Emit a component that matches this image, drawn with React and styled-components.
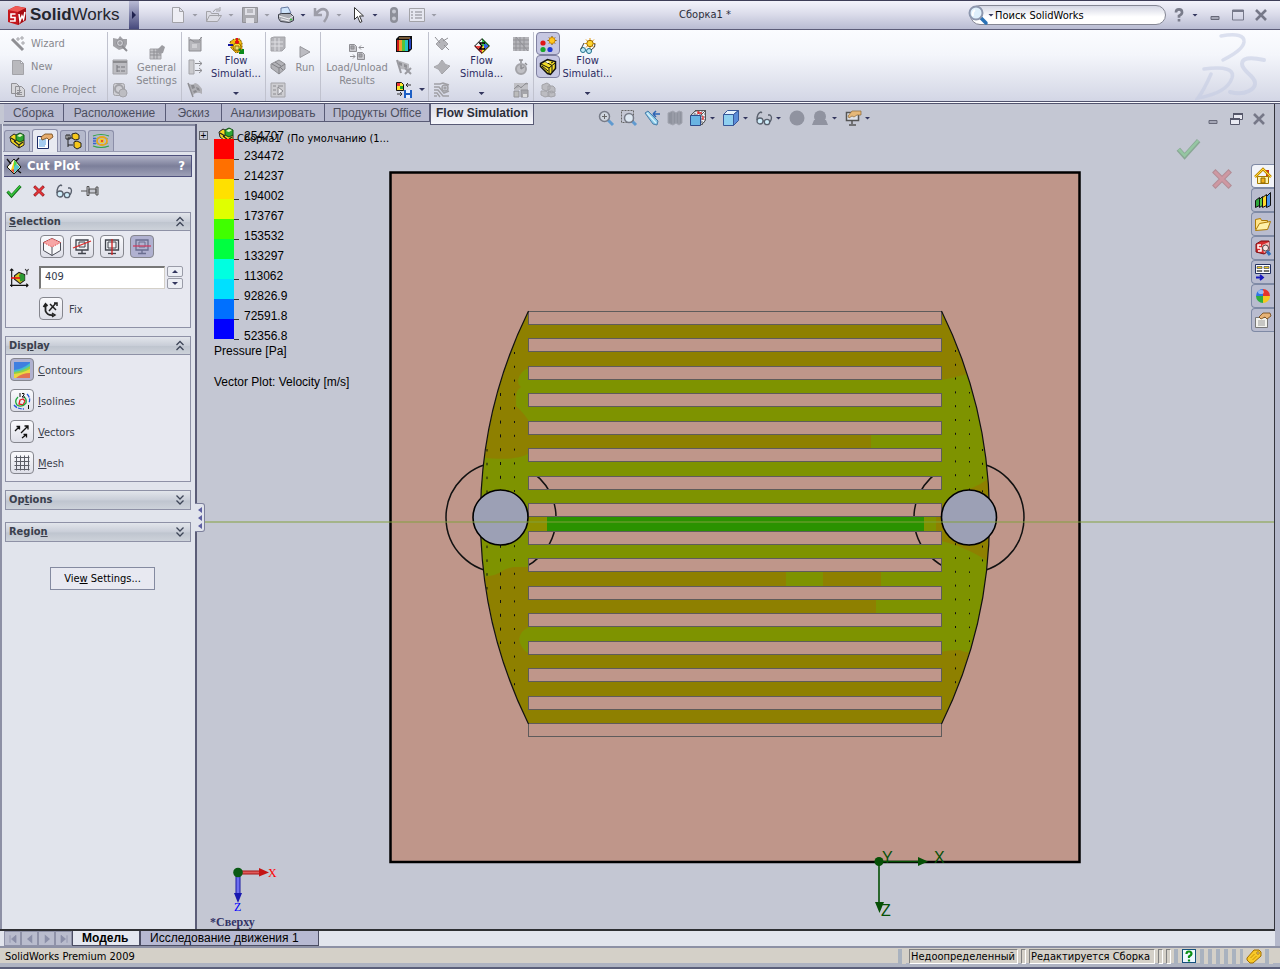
import React from 'react';
import styled, { createGlobalStyle, css } from 'styled-components';

const ui = '"DejaVu Sans Condensed", "DejaVu Sans", sans-serif';
const arial = '"Liberation Sans", Arial, sans-serif';

const Global = createGlobalStyle`
  * { box-sizing: border-box; }
  body { margin: 0; background: #b4b8cb; font: 11px/13px ${ui}; color: #000; }
  button { font: inherit; color: inherit; border: 0; padding: 0; background: none; }
  input { font: inherit; }
  u { text-underline-offset: 1px; }
`;

/* ---------- icons ---------- */

const G = '#a3a3a8';
const box = (x, y, w, h, f, s) => <rect x={x + 0.5} y={y + 0.5} width={w} height={h} fill={f} stroke={s} />;

const art = {
  wand: <g stroke={G} fill="none"><path d="M2 3l11 11" strokeWidth="3" stroke="#8f8f94" /><path d="M8 1v4M6 3h4M12 0v4M10 2h4M13 5v4M11 7h4" /></g>,
  page: <path d="M2.500 1.500h8l3 3v11h-11z M10.500 1.500v3h3" fill="#b9b9bd" stroke={G} />,
  pageLight: <path d="M2.500.5h7l4 4v11h-11z M9.500.5v4h4" fill="#eeeef4" stroke={G} />,
  clone: <g stroke="#919196" fill="#d6d6da"><path d="M1.500 1.500h5l3 3v7h-8zM5.500 4.500h6l3 3v7h-9z" /><path d="M7 8.500h4M7 10.500h5M7 12.500h5" /></g>,
  grayGear: <g fill={G}><path d="M1 2l5 1 2-3 3 3 4 0v5l-2 4-6 2-6-4z" /><circle cx="8" cy="7" r="3.500" fill="#cdcdd2" stroke="#8d8d92" /><path d="M8 5v4M6 7h4" stroke="#8d8d92" /><path d="M10 10l5 5" stroke="#8d8d92" strokeWidth="2" /></g>,
  grayTree: <g><path d="M1 1h14v14H1z" fill="#bcbcc1" stroke={G} /><path d="M1 3h14" stroke="#8c8c90" strokeWidth="2" /><path d="M5 6v7M5 8h3M5 12h3M9 8h4M9 12h4" stroke="#77777c" fill="none" strokeWidth="1" /></g>,
  grayLoop: <g fill="none" stroke={G}><rect x="1.500" y="1.500" width="11" height="12" rx="2" fill="#cfcfd4" /><circle cx="7" cy="7" r="4" strokeWidth="2" /><circle cx="11" cy="11" r="4" fill="#bdbdc2" /></g>,
  settings: <g><path d="M1 5h11v10H1z" fill="#c4c4c8" stroke={G} /><path d="M1 8h11M1 11h11M5 5v10M8 5v10" stroke="#8f8f94" /><path d="M8 6l5-5 3 2-2 6-4 1z" fill="#9d9da2" /></g>,
  grayBox: <g><path d="M2 4h12v11H2z" fill="#b7b7bc" stroke="#8e8e93" /><path d="M2 1v3M14 1v3M3 3l4 3h6M12 4l3-3" stroke="#8e8e93" fill="none" /><path d="M5 8h5v4H5z" fill="#cfcfd3" /></g>,
  grayOut: <g stroke={G} fill="none"><path d="M2 1h5v14H2z" fill="#c9c9cd" /><path d="M8 4.500h7M12 2l3 2.500-3 2.500M8 11.500h7M12 9l3 2.500-3 2.500" stroke="#8e8e93" /></g>,
  grayFlag: <g><path d="M1 1q4 3 7 0 3 0 7 6v5q-5-3-9 1z" fill="#b0b0b5" /><path d="M1 1l5 14" stroke="#8e8e93" strokeWidth="1.500" /><path d="M4 3l3 0 1 3-3 1zM9 5l3 1 1 3-3-1zM6 9l3-1 1 2-3 1z" fill="#8b8b90" /></g>,
  flow: <g><path d="M2 4l4-3h6l2 4v8l-6 2-5-5z" fill="#f2b80a" stroke="#7c5900" strokeDasharray="2 1" /><circle cx="9" cy="9" r="4" fill="#ffe02e" stroke="#9a6b00" /><path d="M7 8h4v4H7z" fill="#e7e07a" stroke="#98720b" /><path d="M9 0v6M7 4h4" stroke="#e31313" strokeWidth="2" /><path d="M0 7h5" stroke="#13139a" strokeWidth="2" /><path d="M11 11l4 4M15 11v4h-4" stroke="#0a8a1c" strokeWidth="2" fill="none" /></g>,
  grayGrid: <g><path d="M1 2l3-1h11v11l-3 3H1z" fill="#b4b4b9" stroke={G} /><path d="M1 6h12M1 10h12M5 2v13M9 2v13" stroke="#dfdfe3" /></g>,
  grayBrick: <g><path d="M1 5l8-4 6 4v5l-6 5-8-6z" fill="#b2b2b7" stroke="#8e8e93" /><path d="M2 5l7 4 6-4M9 9v6M5 3l6 4M10 8l3 3" stroke="#808085" fill="none" /></g>,
  grayRun: <g><path d="M1 1h14v14H1z" fill="#cdcdd1" stroke={G} /><path d="M3 4h3M8 4h5M3 8h3M3 12h3M8 12h4" stroke="#8a8a8f" /><path d="M8 5l5 4-5 4z" fill="#ececf0" stroke="#8a8a8f" /></g>,
  run: <path d="M3 2.500l10 5.500-10 5.500z" fill="#bcbcc2" stroke="#97979c" />,
  load: <g stroke="#8e8e93" fill="#c8c8cd"><path d="M.5.5h5l2 2v5h-7zM8.500 8.500h5l2 2v5h-7z" /><path d="M2 2h3v3H2zM10 10h3v3h-3z" fill="#a5a5aa" /><path d="M10 3.500h5M10 3.500l2-2M10 3.500l2 2M1 12.500h5M6 12.500l-2-2M6 12.500l-2 2" fill="none" /></g>,
  palette: <g><path d="M0 3l3-3h13v13l-3 3H0z" fill="#111" /><path d="M1 4h2v11H1z" fill="#d01818" /><path d="M3 4h3v11H3z" fill="#f0a030" /><path d="M6 4h3v11H6z" fill="#57c437" /><path d="M9 4h3v11H9z" fill="#24c5c5" /><path d="M14 3v10" stroke="#2440c0" strokeWidth="2" /><path d="M3 2h11" stroke="#d8a060" /></g>,
  grayFlagX: <g><path d="M1 1l12 4v6L4 10z" fill="#b8b8bd" /><path d="M3 3l3 1v3l-3-1zM8 5l3 1v3l-3-1z" fill="#8f8f94" /><path d="M1 1l4 13M9 9l6 6M15 9l-6 6" stroke="#9a9aa0" strokeWidth="2" /></g>,
  saveRes: <g><path d="M.5.5h5l2 2v6h-7z" fill="#ffe12e" stroke="#111" /><path d="M1 1h3v3H1z" fill="#e33" /><path d="M4 4h3v3H4z" fill="#2a2" /><path d="M10 3h5M10 3l2-2M10 3l2 2M1 12h5M6 12l-2-2M6 12l-2 2" stroke="#333" fill="none" /><path d="M8 8h8v8H8z" fill="#1d5fc5" /><path d="M10 8h4v3h-4zM10 13h4v3h-4z" fill="#e8f0ff" /></g>,
  grayCut: <g fill="#b5b5ba" stroke={G}><path d="M8 2l6 6-6 6-6-6z" /><path d="M1 1l5 6M10 9l5 5M9 5l5-3" stroke="#8e8e93" /></g>,
  graySurf: <path d="M0 8q5-1 8-7 3 6 8 6-4 4-8 8-3-6-8-7z" fill="#b0b0b5" stroke={G} />,
  grayIso: <g fill="none" stroke="#a0a0a5" strokeWidth="1.500"><path d="M0 2h6l3-1 6 2M0 5h5l5 6 5-2M0 8h4l5 6h6M0 11h3l3 4M0 14h3" /><circle cx="11" cy="6" r="3" /><circle cx="11" cy="6" r="1" /></g>,
  sigma: <g><path d="M8 0l8 8H8z" fill="#3ecf4e" /><path d="M8 0L0 8h8z" fill="#f2f2f2" /><path d="M0 8l8 8V8z" fill="#f04040" /><path d="M16 8l-8 8V8z" fill="#f7d928" /><path d="M10 5l5 3-5 4z" fill="#3461e2" /><path d="M8 .7L15.300 8 8 15.300.7 8z" fill="none" stroke="#111" /><path d="M10.500 6V5H5.500L8 8l-2.500 3h5v-1" fill="none" stroke="#000" strokeWidth="1.300" /></g>,
  grayMesh: <g><path d="M0 1h16v14H0z" fill="#b5b5ba" /><path d="M0 4h16M0 8h16M0 12h16M3 1v14M7 1v14M11 1v14M3 1l12 14" stroke="#929297" /></g>,
  grayClock: <g><circle cx="8" cy="10" r="5" fill="#bfbfc4" stroke={G} strokeWidth="2" /><path d="M8 10V6M6 1h4M8 1v3M12 4l2 2M8 10l3-2" stroke="#8e8e93" strokeWidth="1.500" /></g>,
  grayReport: <g><path d="M1 1h14v7H1z" fill="#c0c0c5" /><path d="M1 7l4-4 3 3 5-5 2 1M8 8h7v7H8z" fill="#a5a5aa" stroke="#929297" /><path d="M1 9h5v6H1z" fill="#bbb" stroke="#929297" /><path d="M10 12h4v3h-4z" fill="#ddd" /></g>,
  lights: <g><circle cx="3" cy="7" r="2.600" fill="#e01515" /><circle cx="3" cy="13.500" r="2.600" fill="#18a52b" /><circle cx="10" cy="13.500" r="2.600" fill="#2139d0" /><path d="M12 0v9M7.500 4.500h9M9 1.500l6 6M15 1.500l-6 6" stroke="#6e4a00" /><circle cx="12" cy="4.500" r="3" fill="#ffc71f" stroke="#d08b00" /></g>,
  brick: <g><path d="M.5 4.500l7-4 8 2v7l-5 6-3-1-7-7z" fill="#f2dc28" stroke="#111" strokeWidth="1.500" /><path d="M1 5l8 4 6-5M9 9v6M5 2.500l7 4M12 7v6" stroke="#111" strokeWidth="1" fill="none" /><path d="M2 7l6 5M11 4l2-1" stroke="#111" /><path d="M7 2l3 1-2 1-3-1z" fill="#fff" /></g>,
  grayPile: <g fill="#bcbcc1" stroke={G}><path d="M2 3l5-2 3 2v4l-4 2-4-2zM8 4l5 0 2 2v4l-4 1-3-2zM1 9l5 0 3 2v3l-4 1-4-2zM8 10l4-1 3 2v3l-4 1-3-1z" /></g>,
  sunGlasses: <g><path d="M10 0v11M4.500 5.500h11M6 1.500l8 8M14 1.500l-8 8" stroke="#e29a10" /><circle cx="10" cy="5.500" r="3.200" fill="#ffd52e" stroke="#9c6a00" /><circle cx="3" cy="12" r="2.500" fill="#bfe9f7" stroke="#1f6f8a" /><circle cx="9" cy="13" r="2.500" fill="#bfe9f7" stroke="#1f6f8a" /><path d="M1 11l3-6M11 12q5-3 4-6l-1 0" stroke="#444" fill="none" /></g>,

  open: <path d="M.5 14.500v-10h4l1 2h7v3M.5 14.500l3-6h12l-4 6zM7 5q2-4 6-3M14 0v4h-4" fill="#dcdce4" stroke={G} />,
  save: <g><path d="M.5.5h15v15H.5z" fill="#aaaab0" stroke="#929298" /><path d="M3 1h10v7H3zM4 11h8v5H4z" fill="#dfdfe6" /><path d="M5 3h6M5 5h6" stroke="#929298" /></g>,
  print: <g><path d="M3 7l0-6 7-1 3 6z" fill="#cfe4fb" stroke="#6679a0" /><path d="M.5 7.500l3-1h9l3 3v4l-4 2-9-1-2-3z" fill="#a9abb2" stroke="#3c3f48" /><path d="M1 9l10 3 4-3M3 12l8 2" stroke="#f2f2f6" fill="none" /><path d="M12 12.500h2" stroke="#3bbf3b" strokeWidth="1.500" /></g>,
  undo: <path d="M1 1v7h7M1.500 7.500Q7 0 12 3q4 4-2 12" fill="none" stroke="#9d9da8" strokeWidth="2.500" />,
  cursor: <path d="M4.500.5v12l3-3 2.500 6 2-1-2.500-5.500h4z" fill="#fff" stroke="#333" />,
  traffic: <g><rect x="4" y="0" width="8" height="16" rx="4" fill="#8d8f99" /><circle cx="8" cy="4.500" r="2" fill="#c5c7d1" /><circle cx="8" cy="11.500" r="2" fill="#c5c7d1" /></g>,
  options: <g><path d="M.5 1.500h15v13H.5z" fill="#e6e7f0" stroke={G} /><path d="M2 5h2M6 5h7M2 8h2M6 8h7M2 11h2M6 11h7" stroke="#85858d" /></g>,
  help: <path d="M4.500 5q0-3.500 3.500-3.500T11.500 5Q11.500 7 8 9v2M8 12.500v3" fill="none" stroke="#797b8a" strokeWidth="3" />,
  min: <path d="M4 9.500h8v3H4z" fill="#a5a7b6" stroke="#666878" />,
  max: <g><path d="M2.500 3h11v10h-11z" fill="none" stroke="#77798a" /><path d="M2 4h12" stroke="#77798a" strokeWidth="2" /></g>,
  close: <path d="M3 3l10 10M13 3L3 13" stroke="#767888" strokeWidth="2.600" />,
  restore: <g fill="#e9eaf2" stroke="#55576a"><path d="M5.500 2.500h9v6h-9z" /><path d="M5 3h10" strokeWidth="2" /><path d="M2.500 7.500h9v6h-9z" /><path d="M2 8h10" strokeWidth="2" /></g>,
  search: <g><path d="M12 12l6 6" stroke="#2a71b5" strokeWidth="3.500" strokeLinecap="round" /><circle cx="8" cy="8" r="6.500" fill="#dff0fc" stroke="#8d97ae" strokeWidth="2" /><path d="M5 11q-1-4 2-6" stroke="#fff" strokeWidth="2" fill="none" /></g>,

  zoomFit: <g><path d="M10 10l5 5" stroke="#5f9ad0" strokeWidth="3" /><circle cx="6.500" cy="6.500" r="5" fill="#d0d6de" stroke="#777b87" strokeWidth="1.500" /><path d="M6.500 4v5M4 6.500h5" stroke="#666" /></g>,
  zoomArea: <g><path d="M.5.5h12v12H.5z" fill="none" stroke="#666" strokeDasharray="2 1" /><path d="M11 11l4 4" stroke="#5f9ad0" strokeWidth="3" /><circle cx="8" cy="8" r="4.500" fill="#dde8f2" stroke="#777b87" strokeWidth="1.500" /></g>,
  prevView: <g><path d="M1 3l3-2 10 10-1 4-4-1z" fill="#8ccbe8" stroke="#4b7da8" /><path d="M3 3l9 10" stroke="#d8f0fb" strokeWidth="1.500" /><path d="M9 4h7M9 4l3-3M9 4l3 3" stroke="#2c65b5" fill="none" strokeWidth="1.500" /></g>,
  section: <path d="M1 3l5-2 3 2 3-2 3 1v11l-3 2-3-2-3 2-5-2z M6 1v14M9 3v11M12 1v14" fill="#8f939e" stroke="#a2a5b0" />,
  orient: <g><path d="M5 1h10v10l-3 4V5H5z" fill="#e9eef5" stroke="#666" strokeDasharray="2 1" /><path d="M.5 5.500h10v10H.5z" fill="#69b4e2" stroke="#2f4c8c" /><path d="M10.500 5.500l5-5M.5 5.500l5-5M10.500 15.500l5-5M5 .5h10M15.500 0v10" stroke="#555" /><path d="M8 3h4M13 6v4M8 1v3" stroke="#d22" strokeWidth="1.300" /></g>,
  cube: <g stroke="#38589a"><path d="M.5 4.500h10v11H.5z" fill="#8fd0f0" /><path d="M.5 4.500l4-4h11l-5 4z" fill="#e6f3fd" /><path d="M10.500 4.500l5-4v10l-5 5z" fill="#5a8cd8" /></g>,
  glasses: <g fill="#cfeefb" stroke="#59606d" strokeWidth="1.300"><circle cx="4" cy="11" r="3" /><circle cx="11" cy="12" r="2.700" /><path d="M1 10Q1 3 5 2l1 1M14 12q3-5 0-7l-2 0" fill="none" /><path d="M7 11h1.500" /></g>,
  ball: <circle cx="8" cy="8" r="7.500" fill="#9093a0" />,
  scene: <g fill="#9093a0"><circle cx="8" cy="6.500" r="6" /><path d="M2 10h12l2 5H0z" /></g>,
  display: <g><path d="M1.500 2.500h12v8h-12z" fill="#dfe3ea" stroke="#555" strokeWidth="1.500" /><path d="M7 11v3M4 15h7" stroke="#555" strokeWidth="1.500" /><path d="M3 6l4-5h9v4h-4l-3 2-2-1-3 2z" fill="#e6b878" stroke="#8b6738" strokeWidth=".7" /></g>,

  asm: <g><path d="M1 4l4-3 4 2v4l2-1 4 1v5l-5 3-8-6z" fill="#f4d822" stroke="#222" /><path d="M7 2l4-2 4 2v5l-4 2-4-2z" fill="#2da532" stroke="#114d14" /><path d="M8 3l3 1 3-2-3-1z" fill="#eaf7c9" /><path d="M5 8l5 4 4-3M10 12v3M2 5l5 3" stroke="#222" fill="none" strokeWidth="1.300" /></g>,
  props: <g><path d="M.5 3.500h11v12H.5z" fill="#fff" stroke="#1c2c66" /><path d="M2 7h7M2 9h7M2 11h7M2 13h6" stroke="#4c9ae0" /><path d="M4 4l4-3h7l1 3-4 3-2-2-5 2z" fill="#e6ac6c" stroke="#6e4413" strokeWidth=".8" /></g>,
  config: <g><path d="M3 2v12M3 5h5M3 12h5M1 2h4v4H1z" fill="#fff" stroke="#222" /><path d="M7 1l4-1 3 2v4l-4 1-3-2zM9 9l3-1 4 2v4l-4 2-3-2z" fill="#f6c71a" stroke="#222" /></g>,
  contourTab: <g fill="none" strokeWidth="1.200"><path d="M0 3q8-3 16 0M0 13q8 3 16 0" stroke="#32a44a" /><path d="M0 5.500h3M0 8h3M0 10.500h3" stroke="#3a60d0" strokeWidth="1.500" /><path d="M3 6q5-4 12 0M3 10q5 4 12 0" stroke="#58b7a0" /><ellipse cx="9" cy="8" rx="5" ry="4" stroke="#e8a51c" strokeWidth="1.800" /><circle cx="9" cy="8" r="1.800" fill="#e44b28" stroke="#f5d11f" /></g>,
  cutPlot: <g><path d="M8 1l7 8-7 7-7-7z" fill="#f5f5a0" stroke="#111" /><path d="M8 2v13l-6-6z" fill="#fff" /><path d="M8 4l6 5-6 6z" fill="#59c5d0" /><path d="M8 2l3 3-3 4z" fill="#4bd94b" /><path d="M8 3v12l-3-3z" fill="#f6d31e" /><path d="M8 11v4l-3-3z" fill="#ef4a3c" /><path d="M1 1l4 5M10 3l3-3M11 12l4 3" stroke="#111" strokeWidth="1.300" /></g>,
  ok: <g fill="none"><path d="M1.500 8.500l4 4.500 9-10" stroke="#126616" strokeWidth="3" /><path d="M1.800 8.500l3.700 4 8.700-9.500" stroke="#35c53c" strokeWidth="1.600" /></g>,
  cancel: <g><path d="M2.500 2.500l11 11M13.500 2.500l-11 11" stroke="#8d1014" strokeWidth="3.200" /><path d="M3 3l10 10M13 3L3 13" stroke="#e4373c" strokeWidth="2" /></g>,
  pin: <g fill="#c6c8d0" stroke="#555" strokeWidth="1"><path d="M-1 8h6" /><path d="M5 3.500h2v9H5zM7 6h7v4H7zM14 4h2v8h-2z" /></g>,
  collapse: <path d="M4.500 7l3.500-3.500L11.500 7M4.500 12L8 8.500l3.500 3.500" fill="none" stroke="#3e4658" strokeWidth="1.300" />,
  expand: <path d="M4.500 3.500L8 7l3.500-3.500M4.500 8.500L8 12l3.500-3.500" fill="none" stroke="#3e4658" strokeWidth="1.300" />,
  cube3d: <g fill="#f8f8fa" stroke="#4c4e58"><path d="M-.5 3.500L8-.5l8.500 4v8L8 16.500l-8.500-5z" /><path d="M-.5 3.500L8-.5l8.500 4L8 8z" fill="#f7a6a6" stroke="#e04040" strokeDasharray="1 1" /><path d="M8 8v8.500" /></g>,
  scrTilt: <g fill="#eef0f2" stroke="#40434c" strokeWidth="1.300"><path d="M2 1h12v10H2z" /><path d="M5 3h6v5H5z" strokeWidth="1" /><path d="M8 11v3M4 14.500h8" /><path d="M-1 9L17 2" stroke="#e02828" /></g>,
  scrVert: <g fill="#eef0f2" stroke="#40434c" strokeWidth="1.300"><path d="M1.500 1h13v10h-13z" /><path d="M4 3h8v6H4z" strokeWidth="1" /><path d="M4 14.500h8" /><path d="M8 0v16" stroke="#d02020" /></g>,
  scrHor: <g fill="#b1b2cf" stroke="#6a6e90" strokeWidth="1.300"><path d="M2 1h12v10H2z" /><path d="M5 3h6v5H5z" strokeWidth="1" /><path d="M8 11v3M4 14.500h8" /><path d="M-1 7h18" stroke="#cc3f62" /></g>,
  axis: <g><path d="M1.500 0v16M0 14.500h16M0 1.500l1.500-1.500L3 1.500M14.500 13l1.500 1.500-1.500 1.500" stroke="#111" fill="none" /><path d="M4 6l4-3 5 2v5l-4 3-5-4z" fill="#d8c220" stroke="#222" /><path d="M8 5l3-1 2 2v4l-4 1z" fill="#2b9a33" /><path d="M1 8h8" stroke="#e01818" strokeWidth="1.500" /><path d="M13.500 0L15 2l1.500-2M15 2v3" stroke="#333" fill="none" /></g>,
  fix: <g fill="none" stroke="#222" strokeWidth="1.800"><path d="M2.500 4v6q2 5 8 4M.5 6l2-3 2 2" /><path d="M6 10l7-8M7 3l6 6M9 12l3 2-3 2M11 2h3v3" strokeWidth="1.500" /></g>,
  contours: <g><path d="M0 0h16v16H0z" fill="#3f7fe0" /><path d="M0 8Q9 7 16 1v15H0z" fill="#44bfc8" /><path d="M0 10q9-1 16-6v12H0z" fill="#8fd048" /><path d="M0 12q9-1 16-5v9H0z" fill="#ecd741" /><path d="M2 16q6-5 14-5v5z" fill="#e27252" /></g>,
  isolines: <g fill="none" strokeWidth="1.300"><path d="M6 7l3-1 2 2-2 4-4-1z" stroke="#e02020" /><path d="M4 4Q0 8 3 12q5 3 9-2 1-4-2-6" stroke="#20a838" /><path d="M0 12q3 4 10 4M13 1q4 4 2 9" stroke="#2455d8" strokeDasharray="4 1" /><path d="M6 0v4M8 .5h2v1.500l-2 2h3M14.500 12v4" stroke="#111" strokeWidth="1" /></g>,
  vectors: <g stroke="#111" fill="none" strokeWidth="1.300"><path d="M1 7l4.500-4.500M2.500 2.500h3v3M7 9l7-7M10.500 2h3.500v3.500M8 14l4.500-3.500M9.500 10.500h3v3" /></g>,
  mesh: <path d="M.5 2.500h15M.5 6.500h15M.5 10.500h15M.5 14.500h15M2.500.5v15M6.500.5v15M10.500.5v15M14.500.5v15" stroke="#5b5d66" />,
  home: <g><path d="M2.500 8.500h11v7h-11z" fill="#fff3a8" stroke="#a47800" /><path d="M11 2h3v6h-3z" fill="#c8322b" /><path d="M0 9l8-8 8 8" fill="none" stroke="#c48c00" strokeWidth="2.500" /><path d="M0 9l8-8 8 8" fill="none" stroke="#ffdc3c" /><path d="M6 10h4v5H6z" fill="#f2b21c" stroke="#8c6400" /></g>,
  library: <g stroke="#111"><path d="M.5 8.500l4-3v8l-4 2z" fill="#2da63a" /><path d="M4.500 7.500l3-3v9l-3 2z" fill="#58c94c" /><path d="M7.500 5.500l4-3v11l-4 2z" fill="#ffd92b" /><path d="M11.500 4.500l4-4v13l-4 2z" fill="#4a92e8" /></g>,
  folder: <g stroke="#ad7a06"><path d="M.5 13.500v-10l5-1 1 2h6v3" fill="#ffe48a" /><path d="M.5 14.500l4-7 11-2-3 8z" fill="#fff0a8" /></g>,
  swSearch: <g><path d="M1 4l5-3h8v10l-5 3-8-2z" fill="#d62b2e" stroke="#7d1114" /><path d="M7 5l7-3v8l-5 3z" fill="#f3b5b2" /><path d="M6 5H3v3h3v3H3" stroke="#fff" fill="none" strokeWidth="1.500" /><circle cx="10.500" cy="8" r="3" fill="#f7e2e2" stroke="#444" /><path d="M12 11l3 4" stroke="#3070b8" strokeWidth="3" /></g>,
  viewPal: <g stroke="#223060"><path d="M.5.500h15v9H.5z" fill="#fff" /><path d="M2 2.500h5v2H2zM9 2.500h5v2H9zM2 6.500h5v1H2zM9 6.500h5v1H9z" fill="#f2c91d" strokeWidth=".6" /><path d="M1 13.500h6M5 11l3 2.500L5 16" stroke="#1818c0" strokeWidth="1.800" fill="none" /></g>,
  appearance: <g><path d="M8 8V1a7 7 0 0 0-7 7z" fill="#2f75e6" /><path d="M8 8h7a7 7 0 0 0-7-7z" fill="#e5362d" /><path d="M8 8H1a7 7 0 0 0 7 7z" fill="#2fae3f" /><path d="M8 8v7a7 7 0 0 0 7-7z" fill="#f6c820" /><ellipse cx="6" cy="4" rx="3" ry="2" fill="#fff" opacity=".5" /></g>,
  custom: <g><path d="M.5 5.500h12v10H.5z" fill="#f3f3ee" stroke="#777" /><path d="M3 9h7M3 11h7M3 13h7" stroke="#999" /><path d="M4 5l4-4h7l1 3-4 3-2-2-4 2z" fill="#e6b276" stroke="#6e4413" strokeWidth=".8" /></g>,
  first: <path d="M4 3v10M12 3L6 8l6 5z" fill="#8b8fa8" stroke="#8b8fa8" />,
  prev: <path d="M11 2L4 8l7 6z" fill="#8b8fa8" />,
  next: <path d="M5 2l7 6-7 6z" fill="#8b8fa8" />,
  last: <path d="M12 3v10M4 3l6 5-6 5z" fill="#8b8fa8" stroke="#8b8fa8" />,
  helpBox: <g>{box(1, 1, 13, 13, '#eef8ff', '#14507c')}<path d="M5.500 6q0-2.500 2.500-2.500T10.500 6Q10.500 7 8 8.500V10M8 11.500v2" stroke="#0b8f14" strokeWidth="2.200" fill="none" /></g>,
  tag: <g><path d="M1 10L8 2h5l2 2v4l-8 7H4l-3-3z" fill="#f9c928" stroke="#a26f00" /><circle cx="12" cy="5" r="1.200" fill="#fff" stroke="#a26f00" /><path d="M4.500 10l4-4M6.500 12l4-4" stroke="#c99100" /></g>,
};

const Svg = styled.svg`
  display: block;
  flex: none;
  overflow: visible;
  width: ${(p) => p.$s || 16}px;
  height: ${(p) => p.$s || 16}px;
`;
const Icon = ({ name, s, vb = 16 }) => (
  <Svg $s={s} viewBox={`0 0 ${vb} ${vb}`} aria-hidden="true">{art[name]}</Svg>
);

const Caret = styled.span`
  flex: none;
  width: 6px;
  height: 3px;
  background: ${(p) => (p.$dim ? '#9a9ba6' : '#33365e')};
  clip-path: polygon(0 0, 100% 0, 50% 100%);
`;

/* ---------- window ---------- */

const Window = styled.div`
  display: flex;
  flex-direction: column;
  min-width: 1180px;
  min-height: 100vh;
`;

const TitleBar = styled.header`
  display: flex;
  align-items: center;
  height: 30px;
  border-top: 1px solid #3e3e58;
  border-bottom: 1px solid #5c5d78;
  background: linear-gradient(#f3f3fb, #dcddeb 45%, #b9bcd2);
`;
const Brand = styled.button`
  display: flex;
  align-items: center;
  gap: 3px;
  width: 129px;
  height: 28px;
  padding-left: 7px;
  background: linear-gradient(#dfe0ec, #b5b8cd);
  font: 17px/20px ${arial};
  color: #23252e;
`;
const BrandMore = styled.button`
  width: 10px;
  height: 28px;
  background: linear-gradient(#b9bbd5, #46497c);
  display: grid;
  place-items: center;
`;
const Tools = styled.div`
  display: flex;
  align-items: center;
  padding-left: 28px;
`;
const Tool = styled.button`
  display: flex;
  align-items: center;
  gap: 6px;
  width: ${(p) => p.$w || 36}px;
  padding-left: 3px;
`;
const DocTitle = styled.h1`
  flex: 1;
  margin: 0;
  text-align: center;
  font: 11px/14px ${ui};
  color: #2c2e3c;
`;
const Search = styled.label`
  position: relative;
  display: flex;
  align-items: center;
  width: 198px;
  padding-left: 2px;
`;
const SearchIcon = styled.span`
  position: absolute;
  left: 0;
  display: flex;
  align-items: center;
`;
const SearchInput = styled.input`
  width: 196px;
  height: 20px;
  padding: 0 8px 0 24px;
  border: 1px solid #858794;
  border-radius: 10px;
  background: linear-gradient(#d5d7e4, #fff 60%);
  color: #000;
  &::placeholder { color: #000; opacity: 1; }
`;
const WinButtons = styled.div`
  display: flex;
  align-items: center;
  gap: 7px;
  padding: 0 11px 0 3px;
`;

/* ---------- ribbon ---------- */

const Ribbon = styled.div`
  display: flex;
  height: 74px;
  padding: 2px 3px 0 4px;
  border-bottom: 3px double #51536e;
  background: linear-gradient(#fbfcff, #f4f6fb 35%, #d3d6e5);
`;
const Group = styled.div`
  display: flex;
  padding-left: ${(p) => p.$pad || 0}px;
  border-right: 1px solid ${(p) => (p.$last ? 'transparent' : '#c0c2ce')};
`;
const Stack = styled.div`
  display: flex;
  flex-direction: column;
  width: ${(p) => p.$w || 24}px;
`;
const Small = styled.button`
  display: flex;
  align-items: center;
  justify-content: ${(p) => (p.$text ? 'flex-start' : 'center')};
  gap: 5px;
  height: 23px;
  padding-left: ${(p) => (p.$text ? 6 : 0)}px;
  color: #87888e;
  ${(p) => p.$on && css`
    border: 1px solid #7f80a0;
    border-radius: 4px;
    background: #c6c7e2;
  `}
`;
const Big = styled.button`
  display: flex;
  flex-direction: column;
  align-items: center;
  width: ${(p) => p.$w}px;
  padding-top: ${(p) => (p.$live ? 6 : 12)}px;
  color: ${(p) => (p.$live ? '#2b2b62' : '#87888e')};
  ${Caret} { margin-top: 12px; }
`;
const BigText = styled.span`
  padding-top: ${(p) => p.$gap || 0}px;
  white-space: pre;
`;
const Watermark = styled.svg`
  width: 72px;
  height: 70px;
  margin-left: auto;
  margin-right: 10px;
`;

/* ---------- workspace ---------- */

const Workspace = styled.main`
  position: relative;
  flex: 1;
  display: flex;
  flex-direction: column;
  margin-right: 5px;
  border-right: 1px solid #33343c;
  border-bottom: 2px solid #2e2f33;
  background: #c4c7d3;
`;
const CommandTabs = styled.nav`
  position: relative;
  z-index: 2;
  display: flex;
  height: 20px;
  padding-left: 4px;
`;
const CommandTab = styled.button`
  width: ${(p) => p.$w}px;
  height: 18px;
  border: 1px solid #595b76;
  border-left-width: 0;
  border-top: 0;
  background: #b9bbd0;
  color: #4c4e5e;
  font: 12px/16px ${arial};
  ${(p) => p.$on && css`
    height: 21px;
    padding-bottom: 2px;
    border-left-width: 1px;
    background: linear-gradient(#d8dae6, #f7f8fc);
    color: #2c2e3a;
    font-weight: bold;
  `}
`;
const Body = styled.div`
  flex: 1;
  display: flex;
`;

const Panel = styled.aside`
  position: relative;
  width: 197px;
  padding-left: 1px;
  border-left: 2px solid #8d90a5;
  border-right: 2px solid #5b5d77;
  background: #e1e4ec;
`;
const PanelTabs = styled.div`
  display: flex;
  align-items: flex-end;
  gap: 2px;
  height: 28px;
  padding-left: 1px;
  border-top: 2px solid #868aa0;
  border-bottom: 1px solid #9699b0;
  background: #c8cbdc;
`;
const PanelTab = styled.button`
  display: grid;
  place-items: center;
  width: 26px;
  height: 21px;
  border: 1px solid #8b8ea8;
  border-bottom: 0;
  border-radius: 3px 3px 0 0;
  background: #b5b9cc;
  ${(p) => p.$on && css`
    height: 23px;
    margin-bottom: -1px;
    background: #e8eaf1;
  `}
`;
const PanelHead = styled.h2`
  display: flex;
  align-items: center;
  gap: 5px;
  height: 22px;
  margin: 3px 3px 0 1px;
  padding: 0 6px 0 2px;
  border: 1px solid #4e507c;
  border-width: 1px 1px 1px 0;
  background: linear-gradient(#b0b2c6, #7c7f9a 50%, #9da0b7);
  color: #fff;
  font: bold 13px/16px ${ui};
  > span { flex: 1; }
`;
const Actions = styled.div`
  display: flex;
  align-items: center;
  gap: 10px;
  height: 28px;
  margin-bottom: 7px;
  padding-left: 3px;
`;
const Section = styled.section`
  margin: 0 4px ${(p) => p.$gap || 8}px 2px;
  border: 1px solid #8e91a6;
  background: #e7e8f0;
  color: #3a3f4d;
`;
const SectionHead = styled.h3`
  display: flex;
  align-items: center;
  justify-content: space-between;
  height: 18px;
  margin: 0;
  padding: 0 2px 0 3px;
  border-bottom: ${(p) => (p.$open ? 1 : 0)}px solid #8e91a6;
  background: linear-gradient(#e2e5eb, #c9ced8 50%, #bfc5cf 55%, #cdd2da);
  font: bold 11px/16px ${ui};
`;
const Fields = styled.div`
  display: flex;
  flex-direction: column;
  gap: 8px;
  padding: 4px 4px 7px;
`;
const Row = styled.div`
  display: flex;
  align-items: center;
  gap: ${(p) => p.$gap || 6}px;
  padding-left: ${(p) => p.$pad || 0}px;
  label { padding-top: 2px; }
`;
const Push = styled.button`
  display: grid;
  place-items: center;
  width: 24px;
  height: 23px;
  border: 1px solid #85868e;
  border-radius: 4px;
  background: ${(p) => (p.$on ? '#b0b1d0' : 'linear-gradient(#fafafd, #dedfe8)')};
`;
const PlaneInput = styled.input`
  width: 126px;
  height: 23px;
  margin-left: 5px;
  padding: 0 4px 3px;
  border: 2px solid #777;
  border-right: 1px solid #d4d0c8;
  border-bottom: 1px solid #d4d0c8;
  background: #fff;
  color: #333a4a;
`;
const Spin = styled.div`
  display: flex;
  flex-direction: column;
  gap: 1px;
  margin-left: -4px;
`;
const SpinButton = styled.button`
  display: grid;
  place-items: center;
  width: 16px;
  height: 11px;
  border: 1px solid #9a9ca8;
  border-radius: 2px;
  background: #eceef4;
  ${Caret} { transform: ${(p) => (p.$up ? 'scaleY(-1)' : 'none')}; }
`;
const Choices = styled(Fields)`
  padding: 3px 4px 7px;
`;
const ViewSettings = styled.button`
  display: block;
  width: 105px;
  height: 23px;
  margin: 25px 0 0 47px;
  border: 1px solid #848aa0;
  background: #e8e9f1;
`;
const Splitter = styled.button`
  position: absolute;
  z-index: 2;
  left: 193px;
  top: 379px;
  width: 10px;
  height: 29px;
  border: 1px solid #7d809c;
  border-left: 0;
  border-radius: 0 3px 3px 0;
  background: #e1e4ec;
  display: flex;
  align-items: center;
  justify-content: center;
`;

/* ---------- graphics area ---------- */

const Canvas = styled.div`
  position: relative;
  flex: 1;
  overflow: hidden;
`;
const Model = styled.svg`
  position: absolute;
  inset: 0;
  width: 100%;
  height: 100%;
`;
const HeadsUp = styled.div`
  position: absolute;
  z-index: 1;
  top: 6px;
  left: 194px;
  right: 0;
  display: flex;
  justify-content: center;
  gap: 7px;
`;
const HudTool = styled.button`
  display: flex;
  align-items: center;
  gap: 4px;
`;
const DocButtons = styled.div`
  position: absolute;
  z-index: 1;
  top: 7px;
  right: 7px;
  display: flex;
  gap: 7px;
`;
const Confirm = styled.div`
  position: absolute;
  top: 12px;
  right: 40px;
  width: 58px;
  opacity: 0.32;
  display: flex;
  flex-direction: column;
  gap: 6px;
  button + button { align-self: flex-end; }
`;
const TaskTabs = styled.nav`
  position: absolute;
  top: 40px;
  right: 0;
  display: flex;
  flex-direction: column;
`;
const TaskTab = styled.button`
  display: grid;
  place-items: center;
  width: 23px;
  height: 24px;
  border: 1px solid #7f8aa5;
  border-right: 0;
  border-radius: 4px 0 0 4px;
  background: ${(p) => (p.$on ? '#f2f4f9' : '#b9bccf')};
`;
const TreeRoot = styled.div`
  position: absolute;
  top: 2px;
  left: 2px;
  display: flex;
  align-items: center;
  gap: 3px;
`;
const TreePlus = styled.button`
  display: grid;
  place-items: center;
  width: 9px;
  height: 9px;
  margin-right: 7px;
  border: 1px solid #5f6168;
  font: 10px/7px ${arial};
`;
const TreeName = styled.span`
  padding-top: 6px;
  white-space: nowrap;
`;
const Legend = styled.div`
  position: absolute;
  top: 4px;
  left: 17px;
  font: 12px/16px ${arial};
`;
const Scale = styled.div`
  display: flex;
  gap: 5px;
  height: 215px;
`;
const Bands = styled.div`
  width: 20px;
  margin-top: 11px;
`;
const Band = styled.div`
  height: 20px;
  background: ${(p) => p.$c};
`;
const Values = styled.ul`
  margin: 0;
  padding: 0;
  list-style: none;
`;
const Value = styled.li`
  display: flex;
  gap: 5px;
  height: 20px;
  margin-left: -5px;
  &::before {
    content: '';
    width: 5px;
    height: 11px;
    border-bottom: 1px solid #333;
  }
`;
const Caption = styled.p`
  margin: 0 0 15px;
`;
const Triad = styled.div`
  position: absolute;
  left: 13px;
  bottom: 0;
  font: bold 12px/14px "Liberation Serif", serif;
  color: #333366;
  svg { display: block; }
`;

/* ---------- bottom ---------- */

const Sheets = styled.nav`
  display: flex;
  height: 15px;
  margin-right: 5px;
  padding-left: 4px;
  background: #e2e5ed;
`;
const Pager = styled.button`
  display: grid;
  place-items: center;
  width: 17px;
  border: 1px solid #8f92a8;
  background: #b9bccd;
`;
const Sheet = styled.button`
  width: ${(p) => p.$w}px;
  padding-left: 9px;
  border: 1px solid #4b4d63;
  border-top: 0;
  background: ${(p) => (p.$on ? '#e4e7f0' : '#b7b9d2')};
  font: ${(p) => (p.$on ? 'bold ' : '')}12px/13px ${arial};
  text-align: left;
`;
const Status = styled.footer`
  display: flex;
  align-items: center;
  gap: 3px;
  height: 23px;
  padding: 0 7px 3px 5px;
  border-top: 2px solid #8d91a5;
  border-bottom: 2px solid #5b5f7a;
  background: linear-gradient(#d4d0c8 80%, #aeb3c2 80%);
`;
const StatusText = styled.span`
  flex: 1;
`;
const Cell = styled.span`
  width: ${(p) => p.$w}px;
  height: 15px;
  padding-left: 1px;
  border: 1px solid #fff;
  border-top-color: #808080;
  border-left-color: #808080;
  background: #d4d0c8;
  white-space: nowrap;
`;
const Bars = styled.span`
  width: ${(p) => p.$w}px;
  height: 15px;
  background: repeating-linear-gradient(90deg, #a9b2bf 0 4px, #d4d0c8 4px 8px);
`;

/* ---------- data ---------- */

const quick = [['pageLight', 'New', 1], ['open', 'Open', 1], ['save', 'Save', 1], ['print', 'Print', 0], ['undo', 'Undo', 1], ['cursor', 'Select', 0], ['traffic', 'Rebuild'], ['options', 'Options', 1]];
const hud = [['zoomFit'], ['zoomArea'], ['prevView'], ['section'], ['orient', 1], ['cube', 1], ['glasses', 1], ['ball'], ['scene', 1], ['display', 1]];
const bands = ['#ff0000', '#ff7000', '#ffe000', '#e0ff00', '#40ff00', '#00ff40', '#00ffe0', '#00e0ff', '#0070ff', '#0000ff'];
const values = ['254707', '234472', '214237', '194002', '173767', '153532', '133297', '113062', '92826.9', '72591.8', '52356.8'];
const taskTabs = ['home', 'library', 'folder', 'swSearch', 'viewPal', 'appearance', 'custom'];

const BROWN = '#8e8000';
const GREEN = '#7e9300';
const PITCH = 27.53;
const finY = (i) => Math.floor(311 + i * PITCH);
const channels = [
  [[528, BROWN]], [[528, BROWN]], [[528, GREEN]], [[528, GREEN]],
  [[528, BROWN], [871, GREEN]], [[528, GREEN]], [[528, GREEN]],
  [[528, '#8e8f00'], [547, '#2a9200'], [924, GREEN], [936, BROWN]],
  [[528, GREEN]], [[528, BROWN], [786, GREEN], [823, BROWN], [881, GREEN]],
  [[528, BROWN], [876, GREEN]], [[528, GREEN]], [[528, BROWN]], [[528, BROWN]], [[528, BROWN]],
];

const IconStack = ({ names, on = [] }) => (
  <Stack>
    {names.map((n, i) => <Small key={n} aria-label={n} $on={on.includes(i)}><Icon name={n} /></Small>)}
  </Stack>
);

const Live = ({ icon, text, w }) => (
  <Big $w={w} $live><Icon name={icon} /><BigText>{text}</BigText><Caret /></Big>
);

function Exchanger() {
  return (
    <Model viewBox="197 124 1077 805" aria-label="Cut plot of pressure in the assembly">
      <defs>
        <clipPath id="left"><path d="M528.500 311A468 468 0 0 0 528.500 724z" /></clipPath>
        <clipPath id="right"><path d="M941.500 311A468 468 0 0 1 941.500 724z" /></clipPath>
      </defs>
      <rect x="390.500" y="172.500" width="689" height="689.500" fill="#bf968a" stroke="#000" strokeWidth="2.500" />
      <g fill="none" stroke="#111" strokeWidth="1.500">
        <ellipse cx="501" cy="517.500" rx="55" ry="55" />
        <ellipse cx="969" cy="517.500" rx="55" ry="55" />
      </g>
      <g clipPath="url(#left)">
        <rect x="478" y="311" width="51" height="413" fill={BROWN} />
        <path d="M478 457q25 3 36 1 10-1 15-5v114h-12q-10 0-18 6-8 4-21 4z" fill={GREEN} />
        <path d="M529 368q-8 2-11 12 0 5 3 7-5 3-5 10v9q6 5 13 15zM529 627q-8 3-10 12 1 9 10 15z" fill={GREEN} />
      </g>
      <g clipPath="url(#right)">
        <rect x="941" y="311" width="51" height="413" fill={BROWN} />
        <path d="M941 380q12-2 26-6l25-6v108q-10 8-20 12-18 4-31 17zM941 541q14 3 24 8 12 5 27 15v90q-25 0-32-4-12 0-19 2z" fill={GREEN} />
      </g>
      {channels.map((parts, i) => parts.map(([x, c], j) => {
        const end = parts[j + 1] ? parts[j + 1][0] : 942;
        const y = finY(i) + 14;
        return <rect key={`${i}-${x}`} x={x} y={y} width={end - x} height={finY(i + 1) - y} fill={c} />;
      }))}
      <g fill="none" stroke="#5f5b5b">
        {Array.from({ length: 16 }, (_, i) => <rect key={i} x="528.500" y={finY(i) + 0.5} width="413" height="13" />)}
      </g>
      <path d="M528.500 311A468 468 0 0 0 528.500 724M941.500 311A468 468 0 0 1 941.500 724" fill="none" stroke="#111" strokeWidth="1.200" />
      <g stroke="#111" strokeWidth="1">
        <path d="M500.500 393V644" strokeDasharray="3 10.800" />
        <path d="M514.500 352V688" strokeDasharray="2 11.800" />
        <path d="M487 449V590" strokeDasharray="2.500 11.300" />
        <path d="M955.500 350V690" strokeDasharray="2 11.800" />
        <path d="M969.500 392V650" strokeDasharray="1.500 12.300" />
        <path d="M982.500 449V570" strokeDasharray="2 11.800" />
      </g>
      <g fill="#9ca0b5" stroke="#000" strokeWidth="1.600">
        <circle cx="500.500" cy="517.500" r="27.500" />
        <circle cx="969" cy="517.500" r="27.500" />
      </g>
      <path d="M197 522H1274" stroke="#82a03c" strokeOpacity=".65" strokeWidth="1.600" />
      <g stroke="#065006" fill="#065006" strokeWidth="1.600">
        <path d="M879 861.500h40M879 861v42" />
        <circle cx="879" cy="861.500" r="4.500" stroke="none" />
        <path d="M918 857l10 4.500-10 4.500zM875 902h9l-4.500 11z" stroke="none" />
      </g>
      <g fill="#065006" fontFamily="Liberation Sans" fontSize="16">
        <text x="882" y="863">Y</text>
        <text x="934" y="863">X</text>
        <text x="881" y="916">Z</text>
      </g>
    </Model>
  );
}

const Choice = ({ id, icon, on, children }) => (
  <Row $gap={4}>
    <Push id={id} type="button" aria-pressed={!!on} $on={on}><Icon name={icon} /></Push>
    <label htmlFor={id}>{children}</label>
  </Row>
);

export default function App() {
  return (
    <Window>
      <Global />
      <TitleBar>
        <Brand>
          <Svg $s={20} viewBox="0 0 20 20" aria-hidden="true">
            <path d="M1 5l8-4 10 2v12l-8 5-10-3z" fill="#c4161c" />
            <path d="M1 5l8-4 10 2-8 4z" fill="#ef5a55" />
            <path d="M11 7l8-4v12l-8 5z" fill="#a50d14" />
            <path d="M8.500 9H4v3.500h4V16H3M12 9l1 7 2-5 1.500 3L18 7" fill="none" stroke="#fff" strokeWidth="1.600" />
          </Svg>
          <span><b>Solid</b>Works</span>
        </Brand>
        <BrandMore aria-label="Menu">
          <Svg $s={8} viewBox="0 0 8 8"><path d="M2 0l4 4-4 4z" fill="#20224f" /></Svg>
        </BrandMore>
        <Tools>
          {quick.map(([n, l, dim]) => (
            <Tool key={n} aria-label={l} $w={n === 'traffic' ? 23 : 36}>
              <Icon name={n} />
              {n !== 'traffic' && <Caret $dim={dim} />}
            </Tool>
          ))}
        </Tools>
        <DocTitle>Сборка1 *</DocTitle>
        <Search>
          <SearchIcon><Icon name="search" s={20} vb={20} /><Caret /></SearchIcon>
          <SearchInput aria-label="Поиск" placeholder="Поиск SolidWorks" />
        </Search>
        <WinButtons>
          <Tool $w={31} aria-label="Help"><Icon name="help" s={14} /><Caret /></Tool>
          <button aria-label="Minimize"><Icon name="min" /></button>
          <button aria-label="Maximize"><Icon name="max" /></button>
          <button aria-label="Close"><Icon name="close" /></button>
        </WinButtons>
      </TitleBar>

      <Ribbon>
        <Group>
          <Stack $w={103}>
            <Small $text><Icon name="wand" />Wizard</Small>
            <Small $text><Icon name="page" />New</Small>
            <Small $text><Icon name="clone" />Clone Project</Small>
          </Stack>
        </Group>
        <Group>
          <IconStack names={['grayGear', 'grayTree', 'grayLoop']} />
          <Big $w={49}><Icon name="settings" /><BigText $gap={1}>{'General\nSettings'}</BigText></Big>
        </Group>
        <Group $pad={1}>
          <IconStack names={['grayBox', 'grayOut', 'grayFlag']} />
          <Live w={58} icon="flow" text={'Flow\nSimulati...'} />
        </Group>
        <Group>
          <IconStack names={['grayGrid', 'grayBrick', 'grayRun']} />
          <Big $w={30}><Icon name="run" /><BigText $gap={1}>Run</BigText></Big>
        </Group>
        <Group $pad={1}>
          <Big $w={70}><Icon name="load" /><BigText $gap={1}>{'Load/Unload\nResults'}</BigText></Big>
          <IconStack names={['palette', 'grayFlagX', 'saveRes']} />
          <Stack $w={12}>
            <Small as="span" /><Small as="span" />
            <Small aria-label="More results"><Caret /></Small>
          </Stack>
        </Group>
        <Group $pad={1}>
          <IconStack names={['grayCut', 'graySurf', 'grayIso']} />
          <Live w={55} icon="sigma" text={'Flow\nSimula...'} />
          <IconStack names={['grayMesh', 'grayClock', 'grayReport']} />
        </Group>
        <Group $last $pad={2}>
          <IconStack names={['lights', 'brick', 'grayPile']} on={[0, 1]} />
          <Live w={55} icon="sunGlasses" text={'Flow\nSimulati...'} />
        </Group>
        <Watermark viewBox="0 0 72 70" aria-hidden="true">
          <g fill="none" stroke="#c3cbe2" strokeOpacity=".55" strokeLinecap="round">
            <path d="M26 4q24-4 23 6-1 8-21 18" strokeWidth="3.500" />
            <path d="M9 37q32-4 28 9-5 15-34 20 6-8 13-24" strokeWidth="3.500" />
            <path d="M69 28q-22-5-22 4 0 4 9 12 9 9-2 15-8 4-19 1" strokeWidth="4" />
          </g>
        </Watermark>
      </Ribbon>

      <Workspace>
        <CommandTabs>
          <CommandTab $w={60}>Сборка</CommandTab>
          <CommandTab $w={102}>Расположение</CommandTab>
          <CommandTab $w={56}>Эскиз</CommandTab>
          <CommandTab $w={103}>Анализировать</CommandTab>
          <CommandTab $w={105}>Продукты Office</CommandTab>
          <CommandTab $w={104} $on>Flow Simulation</CommandTab>
        </CommandTabs>
        <HeadsUp>
          {hud.map(([n, more]) => (
            <HudTool key={n} aria-label={n}><Icon name={n} />{more && <Caret />}</HudTool>
          ))}
        </HeadsUp>
        <DocButtons>
          <button aria-label="Minimize document"><Icon name="min" /></button>
          <button aria-label="Restore document"><Icon name="restore" /></button>
          <button aria-label="Close document"><Icon name="close" /></button>
        </DocButtons>

        <Body>
          <Panel>
            <PanelTabs>
              <PanelTab aria-label="Tree"><Icon name="asm" /></PanelTab>
              <PanelTab aria-label="Properties" $on><Icon name="props" /></PanelTab>
              <PanelTab aria-label="Configurations"><Icon name="config" /></PanelTab>
              <PanelTab aria-label="Flow analysis"><Icon name="contourTab" /></PanelTab>
            </PanelTabs>
            <PanelHead>
              <Icon name="cutPlot" /><span>Cut Plot</span>
              <button aria-label="Help">?</button>
            </PanelHead>
            <Actions>
              <button aria-label="OK"><Icon name="ok" /></button>
              <button aria-label="Cancel"><Icon name="cancel" s={14} /></button>
              <button aria-label="Preview"><Icon name="glasses" /></button>
              <button aria-label="Keep visible"><Icon name="pin" /></button>
            </Actions>

            <Section>
              <SectionHead $open><span><u>S</u>election</span><Icon name="collapse" /></SectionHead>
              <Fields>
                <Row $pad={30}>
                  <Push aria-label="Reference plane"><Icon name="cube3d" /></Push>
                  <Push aria-label="Screen line"><Icon name="scrTilt" /></Push>
                  <Push aria-label="Screen vertical"><Icon name="scrVert" /></Push>
                  <Push aria-label="Screen horizontal" $on><Icon name="scrHor" /></Push>
                </Row>
                <Row>
                  <Icon name="axis" s={18} />
                  <PlaneInput aria-label="Y position" defaultValue="409" />
                  <Spin>
                    <SpinButton $up aria-label="Increase"><Caret /></SpinButton>
                    <SpinButton aria-label="Decrease"><Caret /></SpinButton>
                  </Spin>
                </Row>
                <Row $pad={29}>
                  <Push id="fix"><Icon name="fix" /></Push>
                  <label htmlFor="fix">Fix</label>
                </Row>
              </Fields>
            </Section>
            <Section>
              <SectionHead $open><span>Dis<u>p</u>lay</span><Icon name="collapse" /></SectionHead>
              <Choices>
                <Choice id="contours" icon="contours" on><u>C</u>ontours</Choice>
                <Choice id="isolines" icon="isolines"><u>I</u>solines</Choice>
                <Choice id="vectors" icon="vectors"><u>V</u>ectors</Choice>
                <Choice id="mesh" icon="mesh"><u>M</u>esh</Choice>
              </Choices>
            </Section>
            <Section $gap={12}>
              <SectionHead><span>Op<u>t</u>ions</span><Icon name="expand" /></SectionHead>
            </Section>
            <Section $gap={1}>
              <SectionHead><span>Regio<u>n</u></span><Icon name="expand" /></SectionHead>
            </Section>
            <ViewSettings>Vie<u>w</u> Settings...</ViewSettings>
            <Splitter aria-label="Collapse panel">
              <Svg $s={24} viewBox="0 0 24 24"><path d="M14 1l-4 3 4 3zM14 9l-4 3 4 3zM14 17l-4 3 4 3z" fill="#5d5fa0" /></Svg>
            </Splitter>
          </Panel>

          <Canvas>
            <Exchanger />
            <TreeRoot>
              <TreePlus aria-label="Expand tree">+</TreePlus>
              <Icon name="asm" />
              <TreeName>Сборка1&nbsp; (По умолчанию (1...</TreeName>
            </TreeRoot>
            <Legend>
              <Scale>
                <Bands>{bands.map((c) => <Band key={c} $c={c} />)}</Bands>
                <Values>{values.map((v) => <Value key={v}>{v}</Value>)}</Values>
              </Scale>
              <Caption>Pressure [Pa]</Caption>
              <Caption>Vector Plot: Velocity [m/s]</Caption>
            </Legend>
            <Triad>
              <svg width="70" height="54" viewBox="0 0 70 54" aria-hidden="true">
                <path d="M28 10h22v3H28z" fill="#e05a5a" stroke="#a31515" />
                <path d="M49 7l10 4.500-10 4z" fill="#c41414" />
                <path d="M26 12v22h4V12z" fill="#6d6df0" stroke="#1a1aa0" />
                <path d="M24 32h8l-4 10z" fill="#1818b0" />
                <circle cx="28" cy="11.500" r="4.800" fill="#0a5a14" />
                <g fontFamily="Liberation Serif" fontSize="12" fontWeight="normal">
                  <text x="58" y="16" fill="#f00">X</text>
                  <text x="24" y="50" fill="#00f">Z</text>
                </g>
              </svg>
              <div>*Сверху</div>
            </Triad>
            <Confirm>
              <button aria-label="Accept"><Icon name="ok" s={25} /></button>
              <button aria-label="Discard"><Icon name="cancel" s={24} /></button>
            </Confirm>
            <TaskTabs>
              {taskTabs.map((n, i) => <TaskTab key={n} aria-label={n} $on={i === 0}><Icon name={n} /></TaskTab>)}
            </TaskTabs>
          </Canvas>
        </Body>
      </Workspace>

      <Sheets>
        {['first', 'prev', 'next', 'last'].map((n) => <Pager key={n} aria-label={n}><Icon name={n} s={12} /></Pager>)}
        <Sheet $w={68} $on>Модель</Sheet>
        <Sheet $w={179}>Исследование движения 1</Sheet>
      </Sheets>
      <Status>
        <StatusText>SolidWorks Premium 2009</StatusText>
        <Bars $w={8} />
        <Cell $w={109}>Недоопределенный</Cell>
        <Cell $w={5} />
        <Cell $w={126}>Редактируется Сборка</Cell>
        <Cell $w={5} />
        <Cell $w={5} />
        <Bars $w={4} />
        <Icon name="helpBox" />
        <Bars $w={43} />
        <Icon name="tag" />
        <Bars $w={8} />
      </Status>
    </Window>
  );
}
